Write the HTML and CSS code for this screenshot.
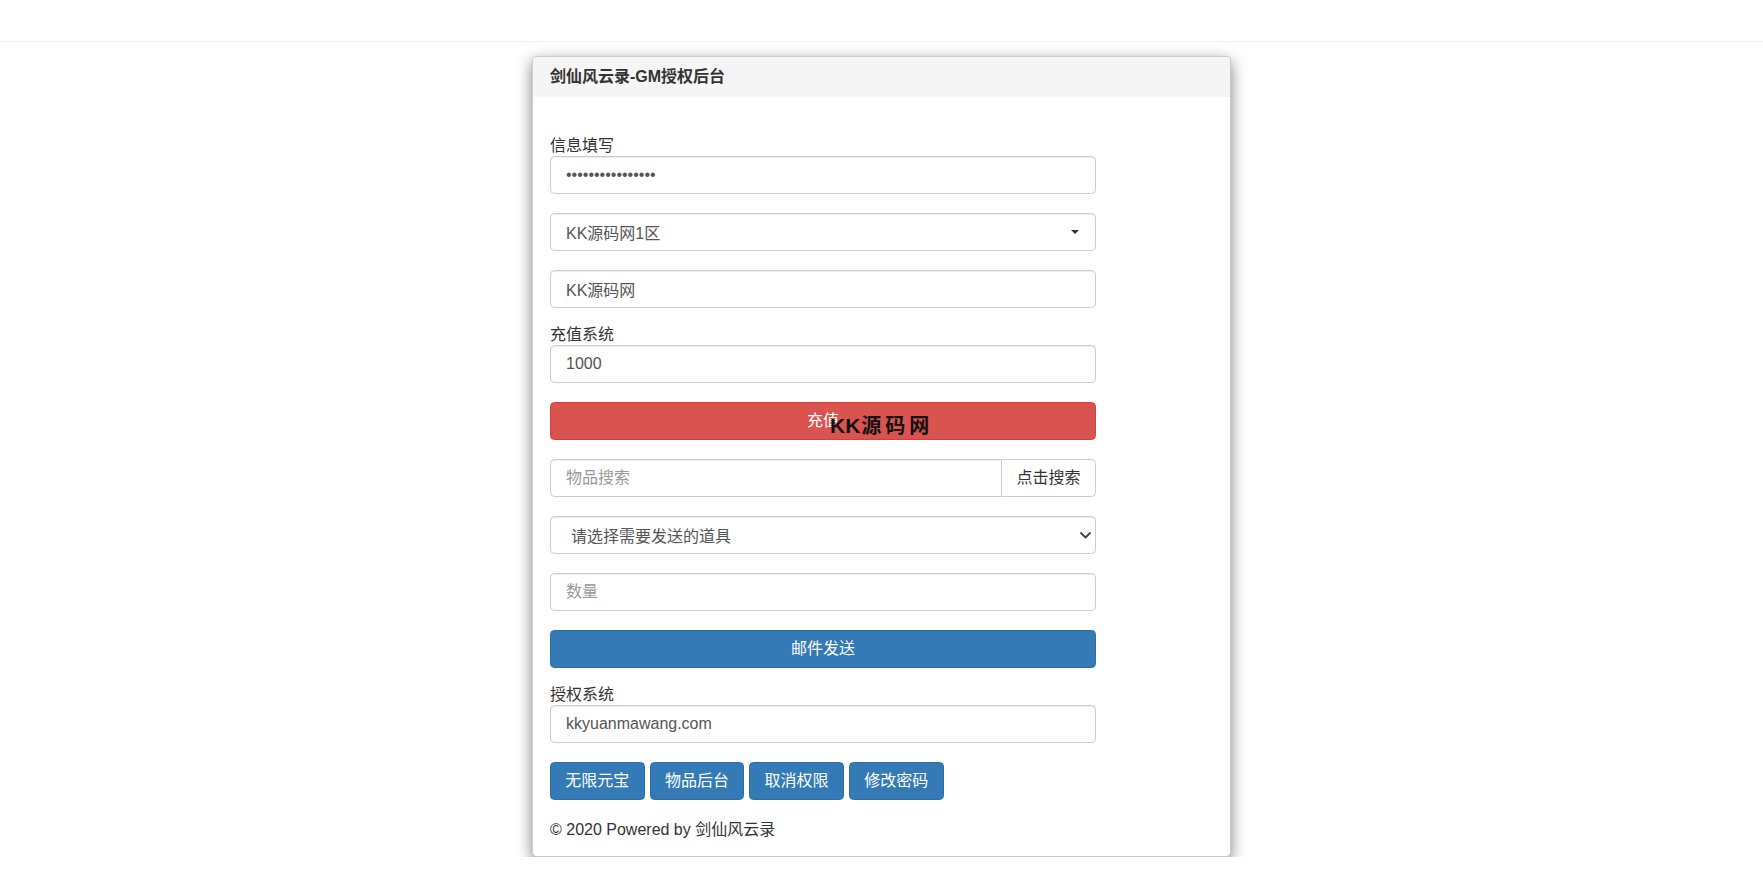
FILE: index.html
```html
<!DOCTYPE html>
<html lang="zh-CN">
<head>
<meta charset="utf-8">
<title>剑仙风云录-GM授权后台</title>
<link rel="stylesheet" href="styles.css">
</head>
<body>
<div class="topbar"></div>
<div class="panel">
  <div class="panel-heading">剑仙风云录-GM授权后台</div>
  <div class="panel-body">
    <div class="form">
      <div class="group">
        <label class="lbl">信息填写</label>
        <input class="field" type="password" value="kkyuanmawang1234">
      </div>
      <div class="group">
        <div class="field select-box">
          <span>KK源码网1区</span>
          <span class="caret"></span>
        </div>
      </div>
      <div class="group">
        <input class="field" type="text" value="KK源码网">
      </div>
      <div class="group">
        <label class="lbl">充值系统</label>
        <input class="field" type="text" value="1000">
      </div>
      <div class="group wm-wrap">
        <button class="btn btn-block btn-danger">充值</button>
        <span class="watermark"><span class="wm-latin">KK</span><span class="wm-cjk">源码网</span></span>
      </div>
      <div class="group input-group">
        <input class="field field-left" type="text" placeholder="物品搜索">
        <button class="btn btn-default btn-right">点击搜索</button>
      </div>
      <div class="group">
        <div class="field select-native">
          <span>请选择需要发送的道具</span>
          <svg class="chev" width="11" height="7" viewBox="0 0 11 7"><polyline points="1,1 5.5,5.5 10,1" fill="none" stroke="#444" stroke-width="1.8" stroke-linecap="round" stroke-linejoin="round"/></svg>
        </div>
      </div>
      <div class="group">
        <input class="field" type="text" placeholder="数量">
      </div>
      <div class="group">
        <button class="btn btn-block btn-primary">邮件发送</button>
      </div>
      <div class="group">
        <label class="lbl">授权系统</label>
        <input class="field" type="text" value="kkyuanmawang.com">
      </div>
      <div class="btn-row">
        <button class="btn btn-primary btn-sq">无限元宝</button>
        <button class="btn btn-primary btn-sq">物品后台</button>
        <button class="btn btn-primary btn-sq">取消权限</button>
        <button class="btn btn-primary btn-sq">修改密码</button>
      </div>
      <div class="footer">© 2020 Powered by 剑仙风云录</div>
    </div>
  </div>
</div>
</body>
</html>
```
FILE: styles.css
```css
* { box-sizing: border-box; }
html, body {
  margin: 0;
  padding: 0;
  background: #fff;
  font-family: "Liberation Sans", "Noto Sans CJK SC", sans-serif;
  font-size: 16px;
  color: #333;
}
.topbar {
  height: 42px;
  border-bottom: 1px solid #f1f1f1;
}
.panel {
  width: 699px;
  margin: 14px auto 0;
  border: 1px solid rgba(0,0,0,.2);
  border-radius: 5px;
  box-shadow: 0 5px 15px rgba(0,0,0,.5);
  background: #fff;
  overflow: hidden;
}
.panel-heading {
  height: 40px;
  line-height: 40px;
  padding: 0 17px;
  background: #f5f5f5;
  font-weight: bold;
  font-size: 16px;
  color: #333;
}
.panel-body {
  padding: 41px 17px 16px;
}
.form {
  width: 546px;
}
.group {
  margin-bottom: 19px;
}
.lbl {
  display: block;
  line-height: 16px;
  height: 16px;
  margin-bottom: 2px;
  font-size: 16px;
  color: #333;
}
.field {
  display: block;
  width: 100%;
  height: 38px;
  padding: 0 15px;
  border: 1px solid #ccc;
  border-radius: 4.5px;
  box-shadow: inset 0 1px 1px rgba(0,0,0,.075);
  font-family: "Liberation Sans", "Noto Sans CJK SC", sans-serif;
  font-size: 16px;
  color: #555;
  background: #fff;
  outline: none;
}
.field::placeholder { color: #999; }
.select-box, .select-native {
  display: flex;
  align-items: center;
  justify-content: space-between;
}
.select-box { padding-right: 16px; }
.select-native { padding: 0 4px 0 20px; }
.caret {
  width: 0;
  height: 0;
  border-top: 4.5px solid #333;
  border-left: 4.5px solid transparent;
  border-right: 4.5px solid transparent;
}
.btn {
  display: inline-block;
  height: 38px;
  padding: 0 15px;
  border: 1px solid transparent;
  border-radius: 4.5px;
  font-family: "Liberation Sans", "Noto Sans CJK SC", sans-serif;
  font-size: 16px;
  line-height: 36px;
  text-align: center;
  cursor: pointer;
}
.btn-block { display: block; width: 100%; }
.btn-danger { background: #d9534f; border-color: #d43f3a; color: #fff; }
.btn-primary { background: #337ab7; border-color: #2e6da4; color: #fff; }
.btn-default { background: #fff; border-color: #ccc; color: #333; }
.wm-wrap { position: relative; }
.watermark {
  position: absolute;
  left: 280px;
  top: 14px;
  font-size: 20px;
  line-height: 20px;
  font-weight: bold;
  color: #111;
  white-space: nowrap;
}
.wm-latin { font-size: 21px; margin-right: 1px; }
.wm-cjk { letter-spacing: 4px; }
.input-group { display: flex; }
.field-left {
  flex: 1;
  border-radius: 4.5px 0 0 4.5px;
}
.btn-right {
  width: 95px;
  padding: 0;
  margin-left: -1px;
  border-radius: 0 4.5px 4.5px 0;
}
.btn-row {
  display: flex;
  gap: 5.2px;
}
.btn-sq {
  width: 94.5px;
  padding: 0;
}
.footer {
  margin-top: 20px;
  line-height: 20px;
  font-size: 16px;
  color: #333;
}
```
